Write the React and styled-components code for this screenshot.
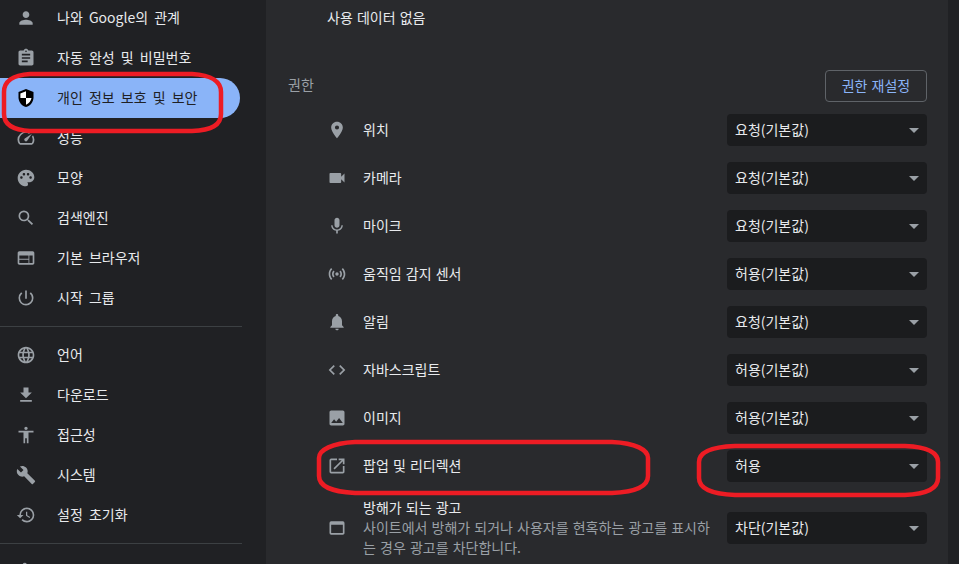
import React from 'react';
import styled, { createGlobalStyle } from 'styled-components';
import {
  MdPerson, MdAssignment, MdSpeed, MdPalette, MdSearch, MdWeb, MdPowerSettingsNew,
  MdLanguage, MdFileDownload, MdAccessibility, MdBuild, MdRestore, MdExtension,
  MdLocationOn, MdVideocam, MdMic, MdSensors, MdNotifications, MdCode, MdImage,
  MdOpenInNew, MdWebAsset,
} from 'react-icons/md';

const Global = createGlobalStyle`
  html, body { margin: 0; height: 100%; overflow: hidden; background: #202124; }
  body { font-family: "Noto Sans CJK KR", "Noto Sans", sans-serif; font-size: 14px; }
`;

const Page = styled.div`
  position: relative;
  width: 959px;
  height: 564px;
  display: flex;
  overflow: hidden;
`;

const Sidebar = styled.nav`
  width: 266px;
  flex: none;
  margin-top: -2px;
`;

const NavItem = styled.div`
  width: 240px;
  height: 40px;
  box-sizing: border-box;
  padding-left: 16px;
  display: flex;
  align-items: center;
  gap: 21px;
  border-radius: 0 20px 20px 0;
  word-spacing: 3px;
  color: ${p => (p.$active ? '#202124' : '#e8eaed')};
  background: ${p => (p.$active ? '#8ab4f8' : 'transparent')};
  svg { flex: none; color: #9aa0a6; }
`;

const Label = styled.span`
  padding-bottom: 2px;
`;

const Divider = styled.hr`
  width: 242px;
  height: 1px;
  border: 0;
  margin: 8px 0;
  background: #3c4043;
`;

const Main = styled.main`
  width: 682px;
  flex: none;
  box-sizing: border-box;
  background: #292a2d;
  padding: 0 21px 0 22px;
`;

const NoData = styled.div`
  height: 36px;
  margin-left: 39px;
  display: flex;
  align-items: center;
  word-spacing: 1px;
  color: #e8eaed;
`;

const SectionHead = styled.div`
  margin-top: 34px;
  margin-bottom: 4px;
  height: 32px;
  display: flex;
  align-items: center;
  justify-content: space-between;
`;

const SectionTitle = styled.h2`
  margin: 0 0 5px;
  font-size: 14px;
  font-weight: 400;
  color: #9aa0a6;
`;

const ResetButton = styled.button`
  width: 102px;
  height: 32px;
  padding: 0 0 2px;
  background: transparent;
  border: 1px solid #5f6368;
  border-radius: 4px;
  font: inherit;
  word-spacing: 1px;
  color: #8ab4f8;
`;

const PermRow = styled.div`
  height: ${p => (p.$tall ? '76px' : '48px')};
  padding-left: 39px;
  display: flex;
  align-items: center;
  color: #e8eaed;
  svg { flex: none; color: #9aa0a6; }
`;

const PermText = styled.div`
  width: 350px;
  margin-left: 16px;
  padding-bottom: 2px;
  flex: none;
  word-spacing: 1px;
`;

const PermDesc = styled.div`
  color: #9aa0a6;
  line-height: 20px;
`;

const Select = styled.div`
  width: 200px;
  height: 32px;
  box-sizing: border-box;
  margin-left: auto;
  padding: 0 8px;
  display: flex;
  align-items: center;
  justify-content: space-between;
  background: #1b1c1e;
  border-radius: 4px;
  color: #e8eaed;
`;

const Caret = styled.span`
  width: 0;
  height: 0;
  border-left: 5px solid transparent;
  border-right: 5px solid transparent;
  border-top: 5px solid #9aa0a6;
`;

const Marks = styled.svg`
  position: absolute;
  left: 0;
  top: 0;
  pointer-events: none;
`;

const Shield = () => (
  <svg width="20" height="20" viewBox="0 0 20 20">
    <path d="M10 1 2.5 4v5.2c0 4.6 3.1 8.6 7.5 9.8 4.4-1.2 7.5-5.2 7.5-9.8V4z" fill="#000" />
    <path d="M10 3.3v6.7H4.4V5.4zM10 10h5.5c-.5 2.9-2.4 5.5-5.5 6.8z" fill="#fff" />
  </svg>
);

const NAV_TOP = [
  [MdPerson, '나와 Google의 관계'],
  [MdAssignment, '자동 완성 및 비밀번호'],
  [Shield, '개인 정보 보호 및 보안', true],
  [MdSpeed, '성능'],
  [MdPalette, '모양'],
  [MdSearch, '검색엔진'],
  [MdWeb, '기본 브라우저'],
  [MdPowerSettingsNew, '시작 그룹'],
];

const NAV_MID = [
  [MdLanguage, '언어'],
  [MdFileDownload, '다운로드'],
  [MdAccessibility, '접근성'],
  [MdBuild, '시스템'],
  [MdRestore, '설정 초기화'],
];

const PERMS = [
  [MdLocationOn, '위치', '요청(기본값)'],
  [MdVideocam, '카메라', '요청(기본값)'],
  [MdMic, '마이크', '요청(기본값)'],
  [MdSensors, '움직임 감지 센서', '허용(기본값)'],
  [MdNotifications, '알림', '요청(기본값)'],
  [MdCode, '자바스크립트', '허용(기본값)'],
  [MdImage, '이미지', '허용(기본값)'],
  [MdOpenInNew, '팝업 및 리디렉션', '허용'],
];

const renderNav = ([Icon, label, active]) => (
  <NavItem key={label} $active={active}>
    <Icon size={20} />
    <Label>{label}</Label>
  </NavItem>
);

const App = () => (
  <Page>
    <Global />
    <Sidebar>
      {NAV_TOP.map(renderNav)}
      <Divider />
      {NAV_MID.map(renderNav)}
      <Divider />
      <NavItem><MdExtension size={20} /></NavItem>
    </Sidebar>
    <Main>
      <NoData><Label>사용 데이터 없음</Label></NoData>
      <SectionHead>
        <SectionTitle>권한</SectionTitle>
        <ResetButton>권한 재설정</ResetButton>
      </SectionHead>
      {PERMS.map(([Icon, label, value]) => (
        <PermRow key={label}>
          <Icon size={20} />
          <PermText>{label}</PermText>
          <Select><Label>{value}</Label><Caret /></Select>
        </PermRow>
      ))}
      <PermRow $tall>
        <MdWebAsset size={20} />
        <PermText>
          방해가 되는 광고
          <PermDesc>사이트에서 방해가 되거나 사용자를 현혹하는 광고를 표시하는 경우 광고를 차단합니다.</PermDesc>
        </PermText>
        <Select><Label>차단(기본값)</Label><Caret /></Select>
      </PermRow>
    </Main>
    <Marks width="959" height="564" fill="none" stroke="#ed1c24" strokeWidth="4.5">
      <path d="M30 74H192C212 75 221 82 221 92V114C221 125 212 130 192 131H30C12 130 4 124 4 114V92C4 82 12 75 30 74Z" />
      <path d="M355 442H612C636 443 648 450 648 458V476C648 486 636 492 612 493H355C332 492 319 486 319 476V458C319 450 332 443 355 442Z" />
      <path d="M735 446H905C928 447 938 453 938 462V478C938 488 928 494 905 495H735C710 494 699 488 699 478V462C699 453 710 447 735 446Z" />
    </Marks>
  </Page>
);

export default App;
